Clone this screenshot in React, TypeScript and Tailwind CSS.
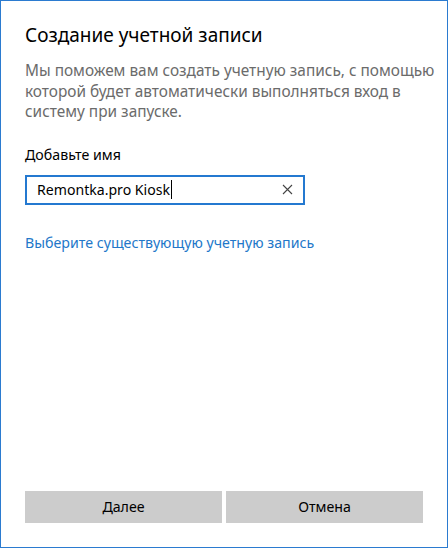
import React from "react";

export default function App() {
  return (
    <div
      className="w-[448px] h-[548px] bg-white border border-[#2b7bd0] flex flex-col px-6 pt-[20px] pb-6"
      style={{ fontFamily: '"Noto Sans", "Open Sans", sans-serif' }}
    >
      <h1 className="text-[19px] leading-[28px] text-black font-normal">Создание учетной записи</h1>
      <p className="mt-[12px] text-[15.4px] leading-[20.5px] text-[#6b6b6b] whitespace-nowrap">
        Мы поможем вам создать учетную запись, с помощью
        <br />
        которой будет автоматически выполняться вход в
        <br />
        систему при запуске.
      </p>
      <label className="mt-[22px] text-[14.2px] leading-[20px] text-black">Добавьте имя</label>
      <div className="mt-[10px] w-[280px] h-[30px] border-2 border-[#2479d0] flex items-center pl-[10px] pr-[8px]">
        <span className="text-[14.1px] leading-[20px] text-black">Remontka.pro Kiosk</span>
        <span className="w-px h-[19px] bg-black ml-[1px]" />
        <div className="flex-1" />
        <svg width="11" height="11" viewBox="0 0 11 11" className="mr-[2px]">
          <path d="M1 1 L10 10 M10 1 L1 10" stroke="#444" strokeWidth="1.1" />
        </svg>
      </div>
      <a className="mt-[28px] text-[14.2px] leading-[20px] text-[#2277c9] cursor-pointer">
        Выберите существующую учетную запись
      </a>
      <div className="flex-1" />
      <div className="grid grid-cols-2 gap-1">
        <button className="h-[32px] bg-[#cccccc] text-[14.2px] text-black">Далее</button>
        <button className="h-[32px] bg-[#cccccc] text-[14.2px] text-black">Отмена</button>
      </div>
    </div>
  );
}
